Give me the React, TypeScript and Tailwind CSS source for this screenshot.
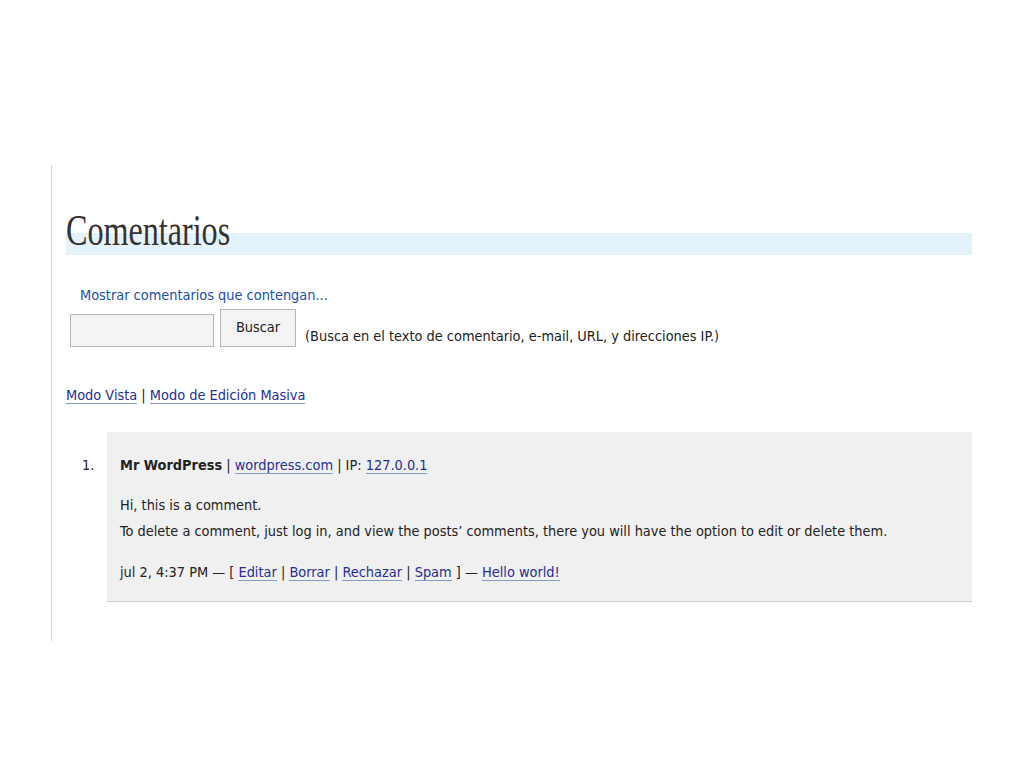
const sans = "font-['DejaVu_Sans_Condensed','DejaVu_Sans',sans-serif] [font-stretch:condensed]";

function A({ children }: { children: React.ReactNode }) {
  return (
    <a href="#" className="border-b border-[#7f9ccc] text-[#1f2f94] no-underline">
      {children}
    </a>
  );
}

export default function App() {
  return (
    <div className={`min-h-[768px] w-[1024px] bg-white pt-[165px] pl-[51px] ${sans} text-[14.4px] text-[#222]`}>
      <div className="h-[476px] w-[921px] border-l border-[#d4d4d4] pl-[14px]">
        <div className="relative h-[90px]">
          <div className="absolute top-[68px] left-0 h-[22px] w-[906px] bg-[#e4f2fc]" />
          <h1 className="relative origin-left scale-x-[0.73] pt-[43px] font-['Liberation_Serif','Times_New_Roman',serif] text-[44px] leading-[46px] text-[#333]">
            Comentarios
          </h1>
        </div>

        <div className="mt-[30px] pl-[14px] text-[#2050a8]">Mostrar comentarios que contengan...</div>
        <div className="mt-[2px] flex items-end pl-[4px]">
          <input className="h-[33px] w-[144px] border border-[#b8b8b8] bg-[#f4f4f4]" />
          <button className="ml-[6px] h-[38px] w-[76px] border border-[#b8b8b8] bg-[#f4f4f4] text-[#222]">Buscar</button>
          <span className="-mb-[1px] ml-[9px]">(Busca en el texto de comentario, e-mail, URL, y direcciones IP.)</span>
        </div>

        <div className="mt-[38px]">
          <A>Modo Vista</A> | <A>Modo de Edición Masiva</A>
        </div>

        <div className="mt-[26px] flex">
          <div className="w-[41px] shrink-0 pt-[20px] pl-[16px] leading-[26px]">1.</div>
          <div className="h-[170px] flex-1 border-b border-[#cfcfcf] bg-[#f0f0f0] pt-[20px] pl-[13px] leading-[26px]">
            <div>
              <b>Mr WordPress</b> | <A>wordpress.com</A> | IP: <A>127.0.0.1</A>
            </div>
            <div className="mt-[14px]">Hi, this is a comment.</div>
            <div>To delete a comment, just log in, and view the posts’ comments, there you will have the option to edit or delete them.</div>
            <div className="mt-[15px]">
              jul 2, 4:37 PM — [ <A>Editar</A> | <A>Borrar</A> | <A>Rechazar</A> | <A>Spam</A> ] — <A>Hello world!</A>
            </div>
          </div>
        </div>
      </div>
    </div>
  );
}
